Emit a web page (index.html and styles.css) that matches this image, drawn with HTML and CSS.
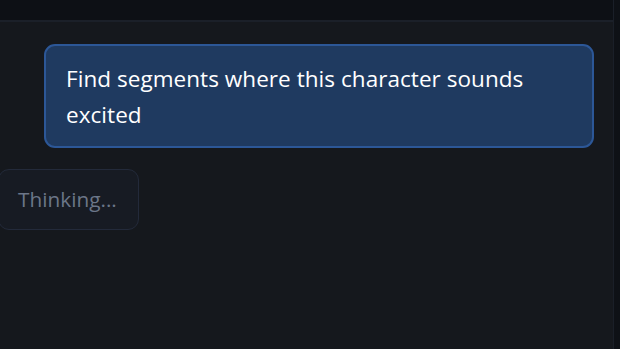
FILE: index.html
```html
<!DOCTYPE html>
<html>
<head>
<meta charset="utf-8">
<link rel="stylesheet" href="styles.css">
</head>
<body>
<div class="app">
  <div class="topbar"></div>
  <div class="chat">
    <div class="msg-row user">
      <div class="bubble user-bubble">Find segments where this character sounds excited</div>
    </div>
    <div class="msg-row bot">
      <div class="bubble thinking">Thinking...</div>
    </div>
  </div>
</div>
</body>
</html>
```
FILE: styles.css
```css
* { box-sizing: border-box; }
html, body {
  margin: 0;
  padding: 0;
  width: 620px;
  height: 349px;
  overflow: hidden;
  background: #0e1116;
  font-family: "Open Sans", "Noto Sans", sans-serif;
}
.app {
  display: flex;
  flex-direction: column;
  width: 614px;
  height: 349px;
  border-right: 1px solid #1a1f28;
}
.topbar {
  height: 22px;
  flex: none;
  background: #0d1015;
  border-bottom: 2px solid #1b2029;
}
.chat {
  flex: 1;
  background: #15181d;
  display: flex;
  flex-direction: column;
  padding: 22px 19px 0 0;
  gap: 21px;
}
.msg-row.user {
  display: flex;
  justify-content: flex-end;
}
.msg-row.bot {
  display: flex;
  justify-content: flex-start;
  margin-left: -2px;
}
.bubble {
  border-radius: 11px;
}
.user-bubble {
  width: 550px;
  height: 104px;
  background: #1f3a60;
  border: 2px solid #2c5797;
  color: #ffffff;
  font-size: 22.5px;
  font-weight: 500;
  letter-spacing: 0.05px;
  line-height: 36px;
  padding: 15px 20px 0 20px;
}
.thinking {
  width: 141px;
  height: 61px;
  background: #171b23;
  border: 1.5px solid #232a3a;
  color: #6b7688;
  font-size: 20.8px;
  line-height: 58px;
  padding-left: 19px;
}
```
